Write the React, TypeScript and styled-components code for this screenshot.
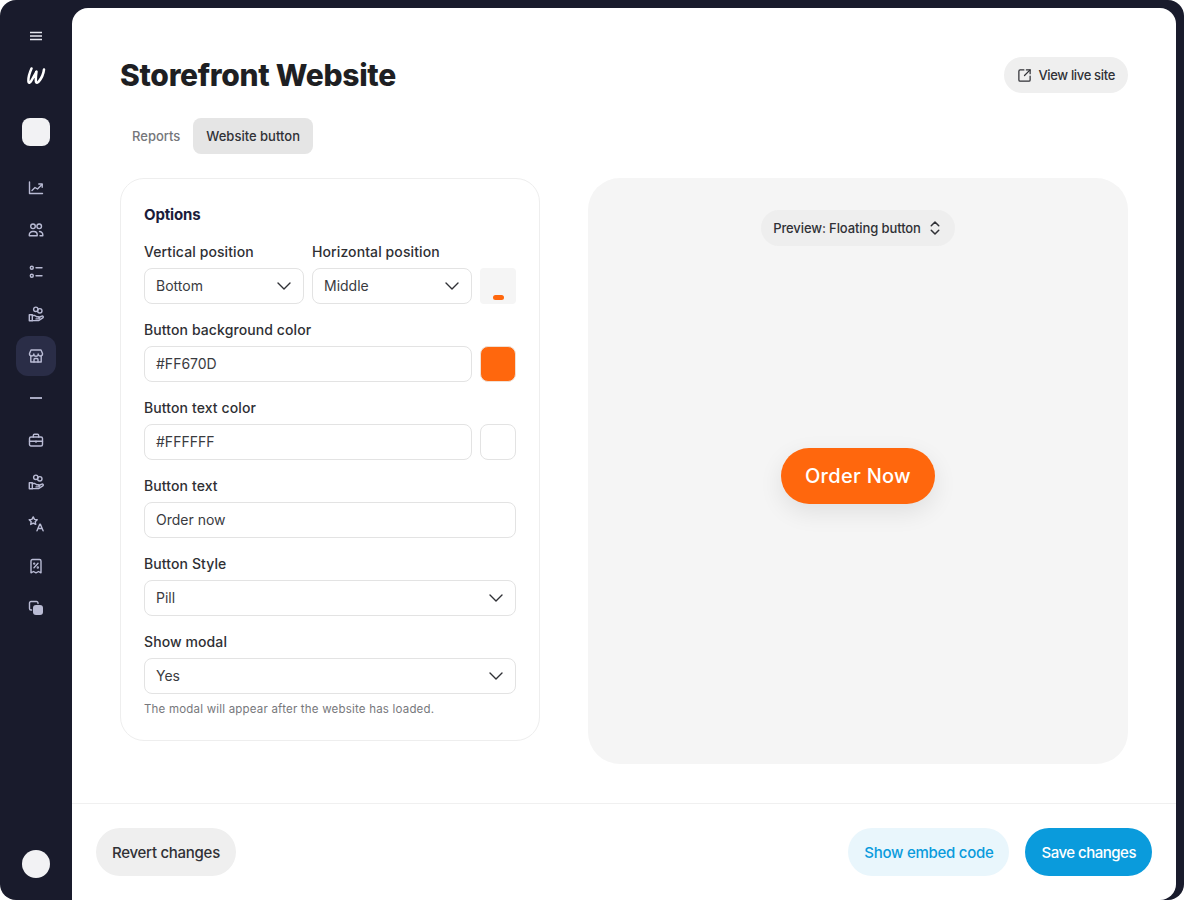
import styled, { createGlobalStyle } from "styled-components";
import { ChevronDown, ChevronsUpDown, SquareArrowOutUpRight } from "lucide-react";
import type { ReactNode } from "react";

const GlobalStyle = createGlobalStyle`
  * { box-sizing: border-box; }
  html, body { margin: 0; padding: 0; background: #fff; }
  body { font-family: Inter, "Liberation Sans", sans-serif; color: #1f2024; }
`;

const Frame = styled.div`
  display: flex;
  width: 1184px;
  height: 900px;
  background: #191b2c;
  border-radius: 16px;
  overflow: hidden;
`;

const Sidebar = styled.aside`
  width: 72px;
  flex-shrink: 0;
  display: flex;
  flex-direction: column;
  align-items: center;
  padding-top: 16px;
  padding-bottom: 22px;
  color: #b9bbd4;
`;

const NavSlot = styled.div<{ $active?: boolean }>`
  width: 40px;
  height: 40px;
  margin-bottom: 2px;
  border-radius: 12px;
  display: flex;
  align-items: center;
  justify-content: center;
  background: ${(p) => (p.$active ? "#2a2d47" : "transparent")};
`;

const MenuSlot = styled.div`
  height: 40px;
  display: flex;
  align-items: center;
  justify-content: center;
  color: #e6e7f0;
`;

const Wordmark = styled.div`
  height: 32px;
  margin-top: 4px;
  display: flex;
  align-items: center;
  justify-content: center;
  color: #fff;
`;

const Swatch = styled.div`
  width: 28px;
  height: 28px;
  margin: 26px 0 22px;
  border-radius: 8px;
  background: #f2f2f4;
`;

const Avatar = styled.div`
  margin-top: auto;
  width: 28px;
  height: 28px;
  border-radius: 50%;
  background: #f2f2f4;
`;

const Main = styled.main`
  flex: 1;
  margin: 8px 8px 0 0;
  background: #fff;
  border-radius: 16px 16px 16px 0;
  display: flex;
  flex-direction: column;
  min-width: 0;
`;

const Content = styled.div`
  flex: 1;
  padding: 49px 48px 0;
`;

const Header = styled.header`
  display: flex;
  align-items: center;
  justify-content: space-between;
  height: 36px;
`;

const Title = styled.h1`
  margin: 0;
  font-family: Inter, sans-serif;
  font-weight: 800;
  font-size: 30px;
  letter-spacing: -0.3px;
  color: #1e1f23;
`;

const LiveLink = styled.a`
  display: flex;
  align-items: center;
  gap: 6px;
  height: 36px;
  padding: 0 13px;
  border-radius: 18px;
  background: #efefef;
  font-size: 13px;
  font-weight: 500;
  letter-spacing: -0.33px;
  color: #303136;
`;

const Tabs = styled.nav`
  display: flex;
  align-items: center;
  gap: 1px;
  margin-top: 25px;
`;

const Tab = styled.button<{ $active?: boolean }>`
  height: 36px;
  padding: 0 ${(p) => (p.$active ? "13px" : "12px")};
  border: 0;
  border-radius: 8px;
  font-family: inherit;
  font-size: 13px;
  font-weight: 500;
  background: ${(p) => (p.$active ? "#e5e5e5" : "transparent")};
  color: ${(p) => (p.$active ? "#303136" : "#75767a")};
`;

const Columns = styled.div`
  display: flex;
  gap: 48px;
  margin-top: 24px;
`;

const OptionsCard = styled.section`
  width: 420px;
  height: 563px;
  padding: 26px 23px 0;
  border: 1px solid #eeeeee;
  border-radius: 24px;
`;

const CardTitle = styled.h2`
  margin: 0 0 17px;
  font-size: 15px;
  line-height: 20px;
  font-weight: 700;
  letter-spacing: -0.15px;
  color: #1b1c3a;
`;

const FieldRow = styled.div`
  display: flex;
  gap: 8px;
  align-items: flex-end;
  margin-bottom: 16px;
`;

const Field = styled.div<{ $width?: number }>`
  display: flex;
  flex-direction: column;
  gap: 6px;
  flex: ${(p) => (p.$width ? `0 0 ${p.$width}px` : "1")};
  min-width: 0;
`;

const Label = styled.label`
  font-size: 14px;
  line-height: 20px;
  font-weight: 500;
  letter-spacing: 0.1px;
  color: #2f3034;
`;

const Control = styled.div`
  display: flex;
  align-items: center;
  justify-content: space-between;
  height: 36px;
  padding: 0 7px 1px 11px;
  border: 1px solid #e3e3e3;
  border-radius: 8px;
  background: #fff;
  font-size: 14px;
  color: #3a3b3f;
`;

const PositionPreview = styled.div`
  flex: 0 0 36px;
  height: 36px;
  display: flex;
  align-items: flex-end;
  justify-content: center;
  padding-bottom: 4px;
  border-radius: 4px;
  background: #f5f5f5;
`;

const PositionDot = styled.span`
  width: 11px;
  height: 5px;
  border-radius: 3px;
  background: #ff670d;
`;

const ColorChip = styled.div<{ $color: string }>`
  flex: 0 0 36px;
  height: 36px;
  border-radius: 8px;
  border: 1px solid ${(p) => (p.$color === "#FFFFFF" ? "#e3e3e3" : "#f0e0d4")};
  background: ${(p) => p.$color};
`;

const Hint = styled.p`
  margin: -9px 0 0;
  font-size: 11.5px;
  line-height: 16px;
  letter-spacing: 0.2px;
  color: #77787c;
`;

const PreviewPane = styled.section`
  width: 540px;
  height: 586px;
  border-radius: 32px;
  background: #f5f5f5;
  display: flex;
  flex-direction: column;
  align-items: center;
  padding-top: 32px;
`;

const PreviewSelect = styled.div`
  display: flex;
  align-items: center;
  gap: 5px;
  height: 36px;
  padding: 0 11px 0 12px;
  border-radius: 18px;
  background: #eeeeee;
  font-size: 13px;
  font-weight: 500;
  letter-spacing: -0.1px;
  color: #303136;
`;

const PreviewStage = styled.div`
  flex: 1;
  display: flex;
  align-items: center;
  justify-content: center;
  padding-bottom: 58px;
`;

const OrderButton = styled.button`
  width: 154px;
  height: 56px;
  border: 0;
  border-radius: 28px;
  background: #ff670d;
  color: #fff;
  font-family: inherit;
  font-size: 20px;
  font-weight: 500;
  letter-spacing: 0.3px;
  box-shadow: 0 8px 24px rgba(0, 0, 0, 0.09);
`;

const Footer = styled.footer`
  display: flex;
  align-items: center;
  justify-content: space-between;
  height: 97px;
  padding: 0 24px;
  border-top: 1px solid #f0f0f0;
`;

const FooterGroup = styled.div`
  display: flex;
  gap: 16px;
`;

const FooterButton = styled.button<{ $tone: "plain" | "soft" | "solid" }>`
  height: 48px;
  padding: 0 16px;
  border: 0;
  border-radius: 24px;
  font-family: inherit;
  font-size: 15px;
  font-weight: 500;
  letter-spacing: ${(p) => (p.$tone === "solid" ? "-0.5px" : "-0.27px")};
  background: ${(p) =>
    p.$tone === "solid" ? "#0a9bdc" : p.$tone === "soft" ? "#e9f6fc" : "#efefef"};
  color: ${(p) =>
    p.$tone === "solid" ? "#fff" : p.$tone === "soft" ? "#0a9bdc" : "#303136"};
`;

function Glyph({ children }: { children: ReactNode }) {
  return (
    <svg
      width="16"
      height="16"
      viewBox="0 0 16 16"
      fill="none"
      stroke="currentColor"
      strokeWidth="1.4"
      strokeLinecap="round"
      strokeLinejoin="round"
    >
      {children}
    </svg>
  );
}

const handWithCoins = (
  <>
    <circle cx="7.800" cy="3.300" r="2.200" />
    <circle cx="11.800" cy="4.800" r="2.200" />
    <path d="M1.300 8.800h3v6h-3z" />
    <path d="M4.300 9.500h2.500l2.100 1.300h1.500a1 1 0 0 1 0 2.100H8" />
    <path d="M10.900 11.500l2.800-1.300a1 1 0 0 1 1.100 1.700l-4.300 2.700H4.300" />
  </>
);

const navIcons: ReactNode[] = [
  <>
    <path d="M1.500 2v11.500h13" />
    <path d="M4 10.500l3-3 2.500 1.500 4.500-4.500" />
    <path d="M10.800 4h3.400v3.300" />
  </>,
  <>
    <circle cx="5" cy="4.300" r="2.300" />
    <circle cx="11.200" cy="4.300" r="2.300" />
    <path d="M1.300 13.800v-1a3.300 3.300 0 0 1 3.300-3.300h1.300a3.300 3.300 0 0 1 3.300 3.300v1z" />
    <path d="M11.500 9.500a3.200 3.200 0 0 1 3.300 3.200v1.100h-2.800" />
  </>,
  <>
    <circle cx="3.800" cy="3.800" r="1.500" />
    <circle cx="3.800" cy="11.800" r="1.500" />
    <path d="M8 3.800h6M8 11.800h6" />
  </>,
  handWithCoins,
  <>
    <path d="M3 2h10l1.500 3.600a2.100 2.100 0 0 1-4.300.4 2.200 2.200 0 0 1-4.400 0 2.100 2.100 0 0 1-4.300-.4z" />
    <path d="M2.800 8v6h10.400V8" />
    <path d="M6 14v-2.500a1 1 0 0 1 1-1h2a1 1 0 0 1 1 1V14" />
  </>,
  <path d="M2 8h12" strokeWidth="1.800" strokeLinecap="butt" />,
  <>
    <rect x="1.500" y="5" width="13" height="9" rx="1.500" />
    <path d="M5.300 5V3.500a1.200 1.200 0 0 1 1.200-1.200h3a1.200 1.200 0 0 1 1.200 1.200V5" />
    <path d="M1.500 9.300h13" />
    <path d="M8 9.300v1" />
  </>,
  handWithCoins,
  <>
    <path d="M5.200.9l1.300 2.500 2.700.4-2 1.900.5 2.700-2.500-1.300-2.500 1.300.5-2.700-2-1.900 2.700-.4z" />
    <path d="M9 14.800l2.700-6.500h.7l2.700 6.500M10 12.500h4" />
  </>,
  <>
    <path d="M3 14.800V3a1.500 1.500 0 0 1 1.500-1.500h7A1.500 1.500 0 0 1 13 3v11.800l-2.500-1.300L8 14.800l-2.500-1.300z" />
    <path d="M10 5.300l-4 4.500" />
    <circle cx="6.200" cy="5.600" r=".5" />
    <circle cx="9.800" cy="9.500" r=".5" />
  </>,
  <>
    <path d="M10 3.500V3a1.500 1.500 0 0 0-1.500-1.500H3A1.500 1.500 0 0 0 1.500 3v5.500A1.500 1.500 0 0 0 3 10h.6" />
    <rect x="5" y="5" width="10" height="10" rx="3" fill="currentColor" stroke="none" />
  </>,
];

function Select({ value }: { value: string }) {
  return (
    <Control>
      {value}
      <ChevronDown size={24} strokeWidth={1.4} color="#303136" />
    </Control>
  );
}

export default function App() {
  return (
    <>
      <GlobalStyle />
      <Frame>
        <Sidebar>
          <MenuSlot>
            <svg width="14" height="12" viewBox="0 0 14 12" fill="none" stroke="currentColor" strokeWidth="1.500">
              <path d="M1 2.400h12M1 6h12M1 9.600h12" />
            </svg>
          </MenuSlot>
          <Wordmark>
            <svg width="20" height="18" viewBox="0 0 20 18" fill="none" stroke="currentColor" strokeWidth="2.500" strokeLinecap="round" strokeLinejoin="round">
              <path d="M5.500 1.500C3.500 6 2 11 2.500 15c.3 1.200 1.500.8 2.300-.4C6.500 12 8.500 8 10.500 4.500 10 8 9.500 12 10 15c.3 1.200 1.500 1 2.500-.2C15 12 17.500 7 18 2.500" />
            </svg>
          </Wordmark>
          <Swatch />
          {navIcons.map((icon, i) => (
            <NavSlot key={i} $active={i === 4}>
              <Glyph>{icon}</Glyph>
            </NavSlot>
          ))}
          <Avatar />
        </Sidebar>
        <Main>
          <Content>
            <Header>
              <Title>Storefront Website</Title>
              <LiveLink>
                <SquareArrowOutUpRight size={15} strokeWidth={2} />
                View live site
              </LiveLink>
            </Header>
            <Tabs>
              <Tab>Reports</Tab>
              <Tab $active>Website button</Tab>
            </Tabs>
            <Columns>
              <OptionsCard>
                <CardTitle>Options</CardTitle>
                <FieldRow>
                  <Field $width={160}>
                    <Label>Vertical position</Label>
                    <Select value="Bottom" />
                  </Field>
                  <Field $width={160}>
                    <Label>Horizontal position</Label>
                    <Select value="Middle" />
                  </Field>
                  <PositionPreview>
                    <PositionDot />
                  </PositionPreview>
                </FieldRow>
                <FieldRow>
                  <Field>
                    <Label>Button background color</Label>
                    <Control>#FF670D</Control>
                  </Field>
                  <ColorChip $color="#FF670D" />
                </FieldRow>
                <FieldRow>
                  <Field>
                    <Label>Button text color</Label>
                    <Control>#FFFFFF</Control>
                  </Field>
                  <ColorChip $color="#FFFFFF" />
                </FieldRow>
                <FieldRow>
                  <Field>
                    <Label>Button text</Label>
                    <Control>Order now</Control>
                  </Field>
                </FieldRow>
                <FieldRow>
                  <Field>
                    <Label>Button Style</Label>
                    <Select value="Pill" />
                  </Field>
                </FieldRow>
                <FieldRow>
                  <Field>
                    <Label>Show modal</Label>
                    <Select value="Yes" />
                  </Field>
                </FieldRow>
                <Hint>The modal will appear after the website has loaded.</Hint>
              </OptionsCard>
              <PreviewPane>
                <PreviewSelect>
                  Preview: Floating button
                  <ChevronsUpDown size={18} strokeWidth={2} />
                </PreviewSelect>
                <PreviewStage>
                  <OrderButton>Order Now</OrderButton>
                </PreviewStage>
              </PreviewPane>
            </Columns>
          </Content>
          <Footer>
            <FooterButton $tone="plain">Revert changes</FooterButton>
            <FooterGroup>
              <FooterButton $tone="soft">Show embed code</FooterButton>
              <FooterButton $tone="solid">Save changes</FooterButton>
            </FooterGroup>
          </Footer>
        </Main>
      </Frame>
    </>
  );
}
